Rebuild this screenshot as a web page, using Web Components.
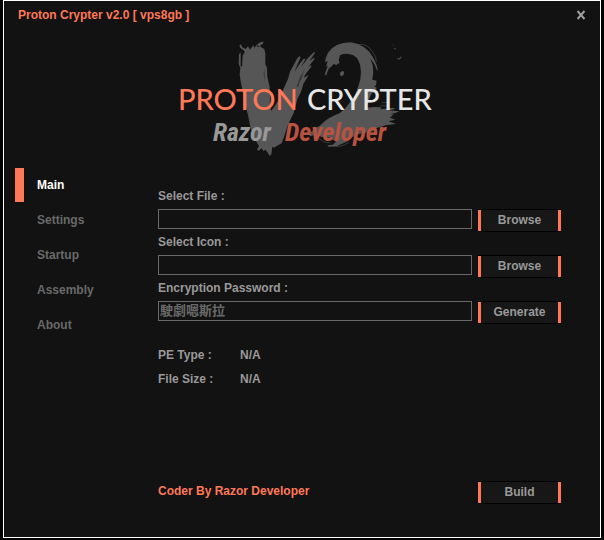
<!DOCTYPE html>
<html lang="en">
<head>
<meta charset="utf-8">
<title>Proton Crypter v2.0</title>
<style>
html, body { height: 100%; }
body {
  margin: 0; box-sizing: border-box; padding: 0 3px 2px; background: #000;
  font: bold 12px/20px "Liberation Sans", "Noto Sans CJK TC", sans-serif; color: #999;
}
</style>
</head>
<body>
<app-window caption="Proton Crypter v2.0 [ vps8gb ]">
  <brand-logo slot="logo"></brand-logo>
  <side-nav slot="nav">
    <nav-item active>Main</nav-item>
    <nav-item>Settings</nav-item>
    <nav-item>Startup</nav-item>
    <nav-item>Assembly</nav-item>
    <nav-item>About</nav-item>
  </side-nav>
  <field-row label="Select File :" action="Browse"></field-row>
  <field-row label="Select Icon :" action="Browse"></field-row>
  <field-row label="Encryption Password :" action="Generate" value="駛劇嗯斯拉"></field-row>
  <file-facts></file-facts>
  <build-bar>Coder By Razor Developer</build-bar>
</app-window>
<script>
const define = (name, html, setup) => customElements.define(name, class extends HTMLElement {
  connectedCallback() {
    if (this.shadowRoot) return;
    const root = this.attachShadow({ mode: 'open' });
    root.innerHTML = '<style>*{box-sizing:border-box}button,input{font:inherit;margin:0}</style>' + html;
    if (setup) setup(this, root);
  }
});

define('accent-button', `
<style>
:host { display: block; width: 83px; flex: none; }
button { display: block; width: 100%; height: 23px; padding: 0; background: #171717; color: #999;
  border: solid #000; border-width: 1px 0; line-height: 21px;
  background-image: linear-gradient(#ff7858, #ff7858), linear-gradient(#ff7858, #ff7858);
  background-size: 3px 100%; background-position: left, right; background-repeat: no-repeat; }
</style>
<button type="button"><slot></slot></button>`);

define('field-row', `
<style>
:host { display: block; }
label { display: block; height: 20px; margin-bottom: 3px; }
div { display: flex; align-items: flex-start; gap: 6px; }
input { flex: 1; min-width: 0; height: 20px; padding: 0 1px 4px; border: 1px solid #696969; border-radius: 0;
  background: #121212; color: #696969; outline: 0; font-size: 13px; line-height: 14px; }
</style>
<label for="value"></label>
<div><input id="value" type="text"><accent-button></accent-button></div>`, (el, root) => {
  root.querySelector('label').textContent = el.getAttribute('label');
  root.querySelector('input').value = el.getAttribute('value') || '';
  root.querySelector('accent-button').textContent = el.getAttribute('action');
});

define('file-facts', `
<style>
:host { display: block; margin-top: 19px; }
dl { display: grid; grid-template-columns: 82px 1fr; grid-auto-rows: 24px; line-height: 24px; margin: 0; }
dd { margin: 0; }
</style>
<dl><dt>PE Type :</dt><dd>N/A</dd><dt>File Size :</dt><dd>N/A</dd></dl>`);

define('build-bar', `
<style>
:host { display: flex; justify-content: space-between; margin-top: auto; color: #ff7858; }
</style>
<span><slot></slot></span><accent-button>Build</accent-button>`);

define('nav-item', `
<style>
:host { display: block; }
button { display: block; width: 100%; height: 34px; padding: 0 0 0 13px; text-align: left;
  background: none; border: 0; border-left: 9px solid transparent; color: #696969; }
:host([active]) button { border-color: #ff7858; color: #fff; }
</style>
<button type="button"><slot></slot></button>`);

define('side-nav', `
<style>
:host { display: block; }
nav { display: grid; gap: 1px; }
</style>
<nav aria-label="Sections"><slot></slot></nav>`);

define('brand-logo', `
<style>
:host { display: block; }
svg { display: block; margin: 0 auto; }
</style>
<svg width="270" height="125" viewBox="0 0 270 125" role="img" aria-label="Proton Crypter by Razor Developer">
  <g transform="scale(.33333)" fill="#565656" stroke-linecap="round">
    <path d="M207 58L212 52L212 92L216 96L218 62L224 52L221 46L212 40L208 33L213 27L216 36L227 42L234 34L240 44L250 30L252 39L264 26L262 36L272 36L283 42L286 56L286 88L291 98L292 125L299 157L302 208L303 228L315 212L328 190L342 158L354 132L360 110L371 90L382 69L388 64L392 67L385 83L373 111L386 91L400 72L407 71L393 97L413 70L433 50L435 54L418 79L432 68L434 72L415 95L422 91L425 94L407 117L401 128L416 120L400 147L393 170L382 193L371 234L354 269L344 300L335 325L320 333L312 338L307 335L304 358L299 363L294 354L286 344L280 348L275 340L266 347L261 344L267 333L258 318L250 301L241 276L234 240L225 206L219 174L213 145L209 119L211 99L206 87Z"/>
    <path d="M263 27L272 21L281 20L278 28L271 30L273 35L265 34Z"/>
    <g transform="translate(390 0)">
      <path d="M75 82L77 70L84 53L97 39L112 29L130 24L152 22L174 27L191 36L208 50L220 69L230 91L234 109L229 102L225 91L216 77L211 70L218 91L220 112L217 134L230 137L228 151L223 154L230 158L226 170L216 174L209 188L204 205L195 219L220 216L244 217L242 223L278 218L287 221L267 226L298 229L286 234L269 238L281 238L270 248L286 254L265 259L288 267L257 271L230 279L218 289L176 297L156 307L137 322L111 333L86 335L82 331L98 329L108 320L90 308L65 306L48 299L29 304L31 294L44 280L58 274L75 258L88 249L107 239L119 235L136 220L151 200L164 182L174 157L181 133L183 111L180 88L171 69L159 60L142 56L129 57L120 61L116 75L119 83L109 90L101 87L95 94L86 101L82 112L78 123L75 117L79 104L84 92L78 95L83 78Z"/>
      <path d="M122 111L129 107L132 112L131 120L124 124L119 118ZM277 27L285 32L279 30ZM281 39L286 39L287 45ZM291 71L300 69L303 63L304 69L296 74Z"/>
      <path d="M178 28Q200 24 219 52Q230 66 229 80M246 203L267 202M242 212L264 213M90 324Q73 326 57 311M92 333Q120 341 147 322" fill="none" stroke="#4c4c4c" stroke-width="2"/>
    </g>
    <path d="M300 181L303 210L299 203ZM230 209L244 268L239 250ZM283 101L285 141L281 118ZM384 141L403 103L393 136ZM379 157L393 119L386 153Z" fill="#343434"/>
  </g>
  <g font-family="Lato" font-size="29" font-weight="500">
    <text x="8" y="75" fill="#ff7858">PROTON</text>
    <text x="137" y="75" fill="#e6e6e6">CRYPTER</text>
  </g>
  <g font-family="'Roboto Condensed', Lato, sans-serif" font-size="26" font-style="italic" font-weight="700">
    <text x="43" y="106" fill="#989898">Razor</text>
    <text x="115" y="106" fill="#b95340">Developer</text>
  </g>
</svg>`);

define('app-window', `
<style>
:host { display: flex; flex-direction: column; min-height: 100%; box-sizing: border-box;
  background: #121212; border: 1px solid #fff; }
header { display: flex; justify-content: space-between; padding: 4px 12px 10px 14px; color: #ff7858; }
header button { width: 14px; height: 20px; padding: 0; border: 0; background: none; color: #999; }
svg { display: block; margin: 0 auto; }
.logo { padding: 0 0 8px 6px; }
.body { flex: 1; display: grid; grid-template-columns: 143px 1fr; padding: 0 39px 33px 11px; }
main { display: flex; flex-direction: column; padding-top: 18px; }
</style>
<header><span></span><button type="button" aria-label="Close"><svg width="8" height="10" viewBox="0 0 8 10" fill="none" stroke="#a0a0a0" stroke-width="2"><path d="M0.5 1L7.5 9M7.5 1L0.5 9"/></svg></button></header>
<div class="logo"><slot name="logo"></slot></div>
<div class="body"><slot name="nav"></slot><main><slot></slot></main></div>`, (el, root) => {
  root.querySelector('span').textContent = el.getAttribute('caption');
});
</script>
</body>
</html>
